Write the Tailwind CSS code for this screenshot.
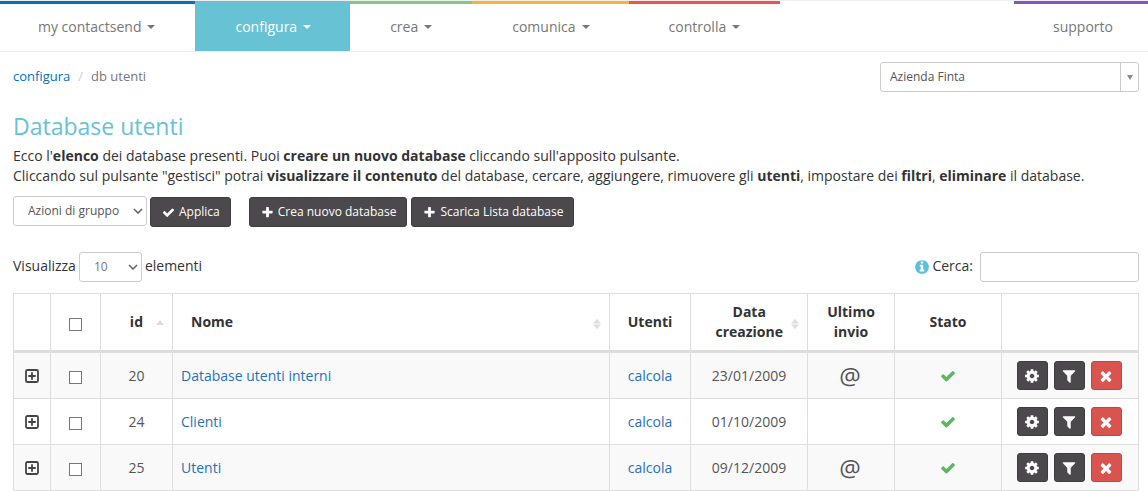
<!DOCTYPE html>
<html lang="it">
<head>
<meta charset="utf-8">
<meta name="viewport" content="width=device-width, initial-scale=1">
<title>Database utenti</title>
<script src="https://cdn.jsdelivr.net/npm/@tailwindcss/browser@4"></script>
</head>
<body class="bg-white font-['Open_Sans',sans-serif] text-sm leading-5 text-[#333]">
<svg class="hidden" aria-hidden="true">
  <symbol id="check" viewBox="0 0 1792 1792"><path d="M1671 566q0 40-28 68l-724 724-136 136q-28 28-68 28t-68-28l-136-136-362-362q-28-28-28-68t28-68l136-136q28-28 68-28t68 28l294 295 656-657q28-28 68-28t68 28l136 136q28 28 28 68z"/></symbol>
  <symbol id="plus" viewBox="0 0 1792 1792"><path d="M1600 736v192q0 40-28 68t-68 28h-416v416q0 40-28 68t-68 28h-192q-40 0-68-28t-28-68v-416h-416q-40 0-68-28t-28-68v-192q0-40 28-68t68-28h416v-416q0-40 28-68t68-28h192q40 0 68 28t28 68v416h416q40 0 68 28t28 68z"/></symbol>
  <symbol id="times" viewBox="0 0 1792 1792"><path d="M1490 1322q0 40-28 68l-136 136q-28 28-68 28t-68-28l-294-294-294 294q-28 28-68 28t-68-28l-136-136q-28-28-28-68t28-68l294-294-294-294q-28-28-28-68t28-68l136-136q28-28 68-28t68 28l294 294 294-294q28-28 68-28t68 28l136 136q28 28 28 68t-28 68l-294 294 294 294q28 28 28 68z"/></symbol>
  <symbol id="cog" viewBox="0 0 1792 1792"><path d="M1152 896q0-106-75-181t-181-75-181 75-75 181 75 181 181 75 181-75 75-181zm512-109v222q0 12-8 23t-20 13l-185 28q-19 54-39 91 35 50 107 138 10 12 10 25t-9 23q-27 37-99 108t-94 71q-12 0-26-9l-138-108q-44 23-91 38-16 136-29 186-7 28-36 28h-222q-14 0-24.5-8.5t-11.5-21.5l-28-184q-49-16-90-37l-141 107q-10 9-25 9-14 0-25-11-126-114-165-168-7-10-7-23 0-12 8-23 15-21 51-66.5t54-70.5q-27-50-41-99l-183-27q-13-2-21-12.5t-8-23.5v-222q0-12 8-23t19-13l186-28q14-46 39-92-40-57-107-138-10-12-10-24 0-10 9-23 26-36 98.5-107.5t94.5-71.5q13 0 26 10l138 107q44-23 91-38 16-136 29-186 7-28 36-28h222q14 0 24.5 8.5t11.5 21.5l28 184q49 16 90 37l142-107q9-9 24-9 13 0 25 10 129 119 165 170 7 8 7 22 0 12-8 23-15 21-51 66.5t-54 70.5q26 50 41 98l183 28q13 2 21 12.5t8 23.5z"/></symbol>
  <symbol id="filter" viewBox="0 0 1792 1792"><path d="M1595 295q17 41-14 70l-493 493v742q0 42-39 59-13 5-25 5-27 0-45-19l-256-256q-19-19-19-45v-486l-493-493q-31-29-14-70 17-39 59-39h1280q42 0 59 39z"/></symbol>
  <symbol id="info" viewBox="0 0 1792 1792"><path d="M1152 1376v-160q0-14-9-23t-23-9h-96v-512q0-14-9-23t-23-9h-320q-14 0-23 9t-9 23v160q0 14 9 23t23 9h96v320h-96q-14 0-23 9t-9 23v160q0 14 9 23t23 9h448q14 0 23-9t9-23zm-128-896v-160q0-14-9-23t-23-9h-192q-14 0-23 9t-9 23v160q0 14 9 23t23 9h192q14 0 23-9t9-23zm640 416q0 209-103 385.5t-279.5 279.5-385.5 103-385.5-103-279.5-279.5-103-385.5 103-385.5 279.5-279.5 385.5-103 385.5 103 279.5 279.5 103 385.5z"/></symbol>
  <symbol id="expand" viewBox="0 0 14 14"><rect x="1" y="1" width="12" height="12" rx="1.5" fill="none" stroke="currentColor" stroke-width="1.8"/><path d="M6.1 3.300h1.800v2.800h2.800v1.800H7.900v2.800H6.100V7.900H3.300V6.100h2.800z"/></symbol>
  <symbol id="caret" viewBox="0 0 8 4"><path d="M0 0h8L4 4z"/></symbol>
  <symbol id="chevron" viewBox="0 0 10 6"><path d="M1 1l4 4 4-4" fill="none" stroke="currentColor" stroke-width="1.6"/></symbol>
  <symbol id="sort" viewBox="0 0 8 10"><path d="M4 0l4 4.600H0zM0 5.400h8L4 10z"/></symbol>
  <symbol id="sort-up" viewBox="0 0 8 5"><path d="M4 0l4 5H0z"/></symbol>
</svg>

<nav class="flex border-y border-[#eee] text-[#777]">
  <a href="#" class="flex h-[50px] items-center gap-[6px] border-t-3 border-[#0072bc] pr-10 pb-0.5 pl-[38px]">my contactsend <svg class="h-1 w-2 fill-current"><use href="#caret"/></svg></a>
  <a href="#" class="flex h-[50px] items-center gap-[6px] border-t-3 border-[#67c2d4] bg-[#67c2d4] pr-[39px] pb-0.5 pl-10 text-white">configura <svg class="h-1 w-2 fill-current"><use href="#caret"/></svg></a>
  <a href="#" class="flex h-[50px] items-center gap-[6px] border-t-3 border-[#82ca82] px-10 pb-0.5">crea <svg class="h-1 w-2 fill-current"><use href="#caret"/></svg></a>
  <a href="#" class="flex h-[50px] items-center gap-[6px] border-t-3 border-[#fbb432] pr-[39px] pb-0.5 pl-10">comunica <svg class="h-1 w-2 fill-current"><use href="#caret"/></svg></a>
  <a href="#" class="flex h-[50px] items-center gap-[6px] border-t-3 border-[#f05050] px-10 pb-0.5">controlla <svg class="h-1 w-2 fill-current"><use href="#caret"/></svg></a>
  <a href="#" class="ml-auto flex h-[50px] items-center border-t-3 border-[#7e57c2] pr-[35px] pb-0.5 pl-[39px]">supporto</a>
</nav>

<main class="pr-[9px] pl-[13px]">
  <div class="flex items-start justify-between pt-[10px]">
    <ol class="flex pt-1 text-[13px]">
      <li><a href="#" class="text-[#0072bc]">configura</a></li>
      <li class="px-2 text-[#ccc]" aria-hidden="true">/</li>
      <li class="text-[#777]">db utenti</li>
    </ol>
    <div class="relative w-[259px]">
      <select aria-label="Azienda" class="block h-[30px] w-full appearance-none rounded-[3px] border border-[#ccc] bg-white pr-6 pl-[9px] text-xs text-[#555]"><option>Azienda Finta</option></select>
      <span class="pointer-events-none absolute inset-y-px right-px flex w-[18px] items-center justify-center border-l border-[#ccc] text-[#888]"><svg class="h-[5px] w-[6px] fill-current" viewBox="0 0 6 5"><path d="M0 0h6L3 5z"/></svg></span>
    </div>
  </div>

  <h1 class="mt-5 text-[23px] leading-[28px] text-[#67c2d4]">Database utenti</h1>
  <p class="mt-[6px]">Ecco l'<b>elenco</b> dei database presenti. Puoi <b>creare un nuovo database</b> cliccando sull'apposito pulsante.<br>
  Cliccando sul pulsante "gestisci" potrai <b>visualizzare il contenuto</b> del database, cercare, aggiungere, rimuovere gli <b>utenti</b>, impostare dei <b>filtri</b>, <b>eliminare</b> il database.</p>

  <div class="mt-[10px] flex items-end text-xs">
    <div class="relative mb-px w-[134px]">
      <select aria-label="Azioni di gruppo" class="block h-[30px] w-full appearance-none rounded-[3px] border border-[#ccc] bg-white pr-5 pl-[14px] text-[#555]"><option>Azioni di gruppo</option></select>
      <svg class="pointer-events-none absolute top-3 right-1 h-[6px] w-[10px] text-[#666]"><use href="#chevron"/></svg>
    </div>
    <button class="ml-[3px] flex h-[30px] items-center gap-1 rounded-[3px] border border-[#3e3c3f] bg-[#4b494c] pr-[10px] pl-[11px] text-white"><svg class="size-[13px] fill-current"><use href="#check"/></svg>Applica</button>
    <button class="ml-[18px] flex h-[30px] items-center gap-1 rounded-[3px] border border-[#3e3c3f] bg-[#4b494c] pr-[10px] pl-[11px] text-white"><svg class="size-[13px] fill-current"><use href="#plus"/></svg>Crea nuovo database</button>
    <button class="ml-1 flex h-[30px] items-center gap-1 rounded-[3px] border border-[#3e3c3f] bg-[#4b494c] pr-[10px] pl-[11px] text-white"><svg class="size-[13px] fill-current"><use href="#plus"/></svg>Scarica Lista database</button>
  </div>

  <div class="mt-[25px] flex items-center justify-between">
    <label class="flex items-center gap-[3px]"><span class="pb-0.5">Visualizza</span>
      <span class="relative block w-[63px]">
        <select class="block h-[30px] w-full appearance-none rounded-[3px] border border-[#ccc] bg-white pr-5 pl-[14px] text-xs text-[#777]"><option>10</option></select>
        <svg class="pointer-events-none absolute top-3 right-1 h-[6px] w-[10px] text-[#666]"><use href="#chevron"/></svg>
      </span>
      <span class="pb-0.5">elementi</span></label>
    <label class="flex items-center"><svg class="mr-0.5 size-4 fill-[#5bc0de]"><use href="#info"/></svg><span class="pb-0.5">Cerca:</span>
      <input type="search" class="ml-[7px] h-[30px] w-[159px] rounded-[3px] border border-[#ccc] px-2 text-xs"></label>
  </div>

  <table class="mt-[11px] w-full table-fixed border-collapse text-center text-[#555] [&_td]:h-[46px] [&_td]:border [&_td]:border-[#ddd] [&_th]:h-[58px] [&_th]:border [&_th]:border-b-3 [&_th]:border-[#ddd] [&_tbody_tr:first-child_td]:h-[47px]">
    <colgroup><col class="w-[37px]"><col class="w-[50px]"><col class="w-[72px]"><col><col class="w-[81px]"><col class="w-[117px]"><col class="w-[87px]"><col class="w-[107px]"><col class="w-[137px]"></colgroup>
    <thead class="text-[#333]">
      <tr>
        <th></th>
        <th><input type="checkbox" aria-label="Seleziona tutti" class="mx-auto mt-1 block size-[13px] appearance-none border border-[#767676] bg-white checked:bg-[#767676]"></th>
        <th><span class="flex items-center justify-end gap-[13px] pr-2">id <svg class="h-[5px] w-2 fill-[#ddd]"><use href="#sort-up"/></svg></span></th>
        <th><span class="flex items-center justify-between pr-2 pl-[18px]">Nome <svg class="mt-1 h-[10px] w-2 fill-[#ddd]"><use href="#sort"/></svg></span></th>
        <th>Utenti</th>
        <th><span class="flex items-center justify-end gap-2 pr-2"><span>Data<br>creazione</span> <svg class="mt-1 h-[10px] w-2 fill-[#ddd]"><use href="#sort"/></svg></span></th>
        <th>Ultimo<br>invio</th>
        <th>Stato</th>
        <th></th>
      </tr>
    </thead>
    <tbody>
      <tr class="bg-[#f9f9f9]">
        <td><button aria-label="Espandi" class="mx-auto block text-[#444]"><svg class="size-[14px] fill-current"><use href="#expand"/></svg></button></td>
        <td><input type="checkbox" aria-label="Seleziona 20" class="mx-auto mt-1 block size-[13px] appearance-none border border-[#767676] bg-white checked:bg-[#767676]"></td>
        <td>20</td>
        <td class="pl-2 text-left"><a href="#" class="text-[#1f72b8]">Database utenti interni</a></td>
        <td><a href="#" class="text-[#1f72b8]">calcola</a></td>
        <td>23/01/2009</td>
        <td class="pr-0.5 text-2xl leading-6">@</td>
        <td><svg class="mx-auto size-4 fill-[#5cb85c]"><use href="#check"/></svg></td>
        <td><div class="flex justify-center gap-[6px] pr-0.5 text-white">
          <button aria-label="Gestisci" class="flex h-[29px] w-[31px] items-center justify-center rounded-[3px] border border-[#3e3c3f] bg-[#4b494c]"><svg class="size-4 fill-current"><use href="#cog"/></svg></button>
          <button aria-label="Filtri" class="flex h-[29px] w-[31px] items-center justify-center rounded-[3px] border border-[#3e3c3f] bg-[#4b494c]"><svg class="size-4 fill-current"><use href="#filter"/></svg></button>
          <button aria-label="Elimina" class="flex h-[29px] w-[31px] items-center justify-center rounded-[3px] border border-[#d43f3a] bg-[#d9534f]"><svg class="size-4 fill-current"><use href="#times"/></svg></button>
        </div></td>
      </tr>
      <tr>
        <td><button aria-label="Espandi" class="mx-auto block text-[#444]"><svg class="size-[14px] fill-current"><use href="#expand"/></svg></button></td>
        <td><input type="checkbox" aria-label="Seleziona 24" class="mx-auto mt-1 block size-[13px] appearance-none border border-[#767676] bg-white checked:bg-[#767676]"></td>
        <td>24</td>
        <td class="pl-2 text-left"><a href="#" class="text-[#1f72b8]">Clienti</a></td>
        <td><a href="#" class="text-[#1f72b8]">calcola</a></td>
        <td>01/10/2009</td>
        <td></td>
        <td><svg class="mx-auto size-4 fill-[#5cb85c]"><use href="#check"/></svg></td>
        <td><div class="flex justify-center gap-[6px] pr-0.5 text-white">
          <button aria-label="Gestisci" class="flex h-[29px] w-[31px] items-center justify-center rounded-[3px] border border-[#3e3c3f] bg-[#4b494c]"><svg class="size-4 fill-current"><use href="#cog"/></svg></button>
          <button aria-label="Filtri" class="flex h-[29px] w-[31px] items-center justify-center rounded-[3px] border border-[#3e3c3f] bg-[#4b494c]"><svg class="size-4 fill-current"><use href="#filter"/></svg></button>
          <button aria-label="Elimina" class="flex h-[29px] w-[31px] items-center justify-center rounded-[3px] border border-[#d43f3a] bg-[#d9534f]"><svg class="size-4 fill-current"><use href="#times"/></svg></button>
        </div></td>
      </tr>
      <tr class="bg-[#f9f9f9]">
        <td><button aria-label="Espandi" class="mx-auto block text-[#444]"><svg class="size-[14px] fill-current"><use href="#expand"/></svg></button></td>
        <td><input type="checkbox" aria-label="Seleziona 25" class="mx-auto mt-1 block size-[13px] appearance-none border border-[#767676] bg-white checked:bg-[#767676]"></td>
        <td>25</td>
        <td class="pl-2 text-left"><a href="#" class="text-[#1f72b8]">Utenti</a></td>
        <td><a href="#" class="text-[#1f72b8]">calcola</a></td>
        <td>09/12/2009</td>
        <td class="pr-0.5 text-2xl leading-6">@</td>
        <td><svg class="mx-auto size-4 fill-[#5cb85c]"><use href="#check"/></svg></td>
        <td><div class="flex justify-center gap-[6px] pr-0.5 text-white">
          <button aria-label="Gestisci" class="flex h-[29px] w-[31px] items-center justify-center rounded-[3px] border border-[#3e3c3f] bg-[#4b494c]"><svg class="size-4 fill-current"><use href="#cog"/></svg></button>
          <button aria-label="Filtri" class="flex h-[29px] w-[31px] items-center justify-center rounded-[3px] border border-[#3e3c3f] bg-[#4b494c]"><svg class="size-4 fill-current"><use href="#filter"/></svg></button>
          <button aria-label="Elimina" class="flex h-[29px] w-[31px] items-center justify-center rounded-[3px] border border-[#d43f3a] bg-[#d9534f]"><svg class="size-4 fill-current"><use href="#times"/></svg></button>
        </div></td>
      </tr>
    </tbody>
  </table>
</main>
</body>
</html>
